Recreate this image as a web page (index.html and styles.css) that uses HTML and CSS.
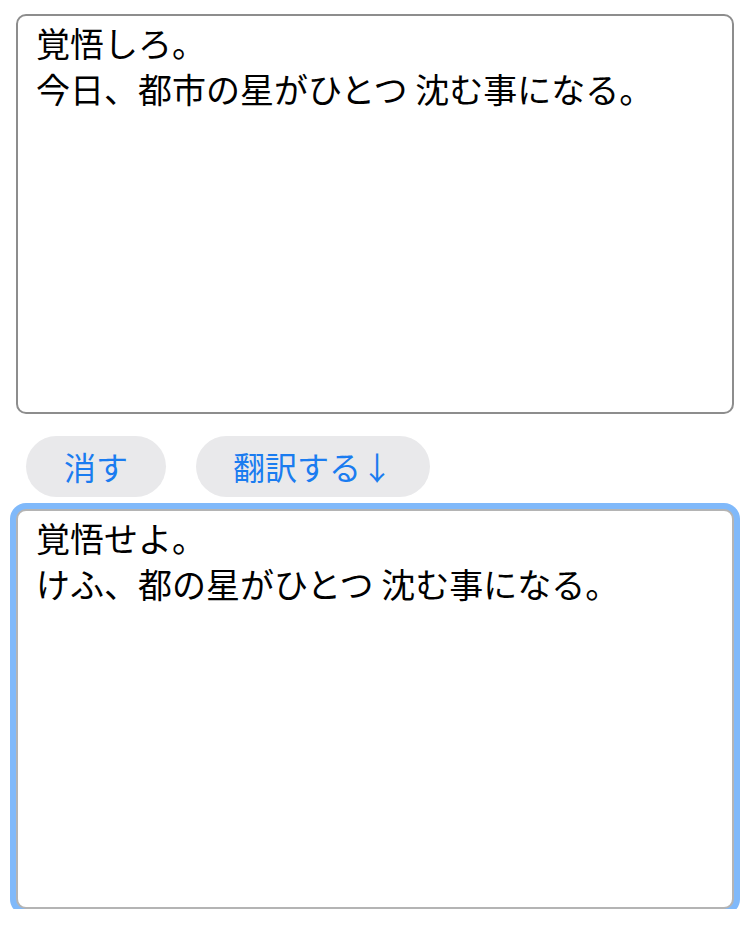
FILE: index.html
```html
<!DOCTYPE html>
<html lang="ja">
<head>
<meta charset="utf-8">
<title>翻訳</title>
<link rel="stylesheet" href="styles.css">
</head>
<body>
<main class="page">
  <textarea class="box source" readonly>覚悟しろ。
今日、都市の星がひとつ 沈む事になる。</textarea>
  <div class="actions">
    <button class="pill" type="button">消す</button>
    <button class="pill" type="button">翻訳する↓</button>
  </div>
  <textarea class="box result focused" readonly>覚悟せよ。
けふ、都の星がひとつ 沈む事になる。</textarea>
</main>
</body>
</html>
```

FILE: styles.css
```css
html, body {
  margin: 0;
  padding: 0;
  background: #ffffff;
}

.page {
  display: flex;
  flex-direction: column;
  padding: 14px 16px 0 16px;
  font-family: "Noto Sans CJK JP", "Noto Sans", sans-serif;
}

.box {
  display: block;
  box-sizing: border-box;
  width: 718px;
  height: 400px;
  margin: 0;
  padding: 4px 18px;
  border: 2px solid #8d8d8d;
  border-radius: 10px;
  background: #ffffff;
  color: #000000;
  font-family: "Noto Sans CJK JP", "Noto Sans", sans-serif;
  font-size: 34px;
  line-height: 46px;
  resize: none;
  outline: none;
  overflow: hidden;
}

.result {
  border-color: #b4b4b4;
}

.focused {
  box-shadow: 0 0 0 6px #80b9fa;
}

.actions {
  display: flex;
  gap: 30px;
  padding: 22px 0 12px 10px;
}

.pill {
  height: 61px;
  padding: 0 38px;
  border: none;
  border-radius: 31px;
  background: #e9e9eb;
  color: #1a7cf0;
  font-family: "Noto Sans CJK JP", "Noto Sans", sans-serif;
  font-size: 32px;
  line-height: 61px;
  cursor: pointer;
}

.pill + .pill {
  padding: 0 37px;
}
```
